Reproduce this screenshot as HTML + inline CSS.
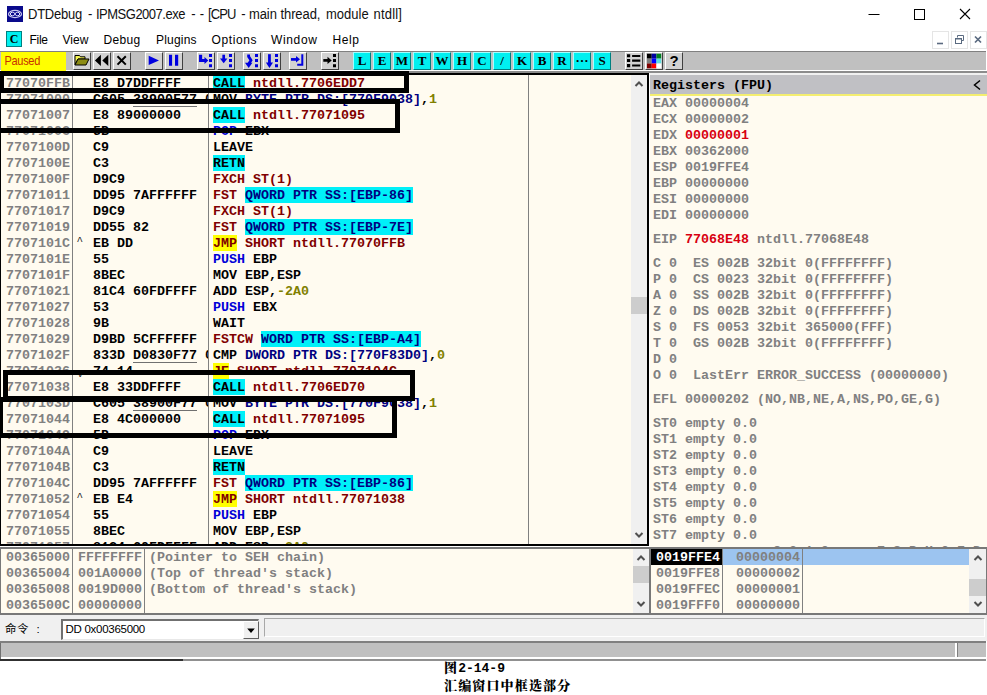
<!DOCTYPE html><html><head><meta charset="utf-8"><title>DTDebug</title><style>
*{box-sizing:border-box}
html,body{margin:0;padding:0;background:#fff}
body{width:987px;height:695px;position:relative;overflow:hidden;font-family:"Liberation Sans",sans-serif;}
.abs{position:absolute}
.mono{font-family:"Liberation Mono",monospace;font-weight:bold;font-size:13.33px;line-height:18px;white-space:pre;letter-spacing:0}
.seg{display:inline-block;height:16px;line-height:18px;vertical-align:top}
.title{left:29px;top:6px;font-size:13px;line-height:18px;color:#000;white-space:pre}
.title2 span{position:absolute;top:5.6px;font-size:13px;line-height:18px;color:#111;white-space:pre;transform:scaleY(1.08);transform-origin:0 13.4px}
.menu span{position:absolute;top:31px;font-size:12px;line-height:18px;color:#000}
.tb{left:0;top:51px;width:986px;height:19px;background:#c0c0c0;border-top:1px solid #808080}
.btn{position:absolute;top:52px;width:18px;height:18px;background:#d2d2d2;border:1px solid;border-color:#fff #404040 #404040 #fff}
.lbtn{position:absolute;top:52px;width:18px;height:18px;background:#00f0f0;border:1px solid;border-color:#a0ffff #008080 #008080 #a0ffff;font-family:"Liberation Serif",serif;font-weight:bold;font-size:13px;line-height:16px;text-align:center;color:#000}
.pane{position:absolute;background:#fffbf0;overflow:hidden}
.row{position:absolute;left:0;height:16px;width:100%}
.row .c{position:absolute;top:0;height:16px;line-height:18px}
.g{color:#808080}.k{color:#000}.r{color:#800000}.n{color:#000080}.b{color:#0000d8}.o{color:#808000}.red{color:#d80010}
.cy{background:#00f0f8}.ye{background:#ffff00}
.vl{position:absolute;width:1px;background:#808080}
.box{position:absolute;border:5px solid #000}
.sb{position:absolute;background:#f0f0f0}
.thumb{position:absolute;background:#cdcdcd}
.cap{position:absolute;left:444px;font-family:"Liberation Serif","Noto Serif CJK SC",serif;font-weight:900;font-size:13px;letter-spacing:1.15px;line-height:16px;color:#000;white-space:pre}
.cap i{font-style:normal;display:inline-block;width:7.8px;text-align:center;letter-spacing:0;font-family:'Liberation Mono',monospace;font-size:13px}
</style></head><body>
<svg class="abs" style="left:7px;top:6px" width="16" height="16" viewBox="0 0 16 16"><rect width="16" height="16" fill="#0a0a8c"/><ellipse cx="8" cy="8" rx="6.5" ry="3.6" fill="none" stroke="#c8c8f0" stroke-width="1.2"/><ellipse cx="5.5" cy="8" rx="2.2" ry="1.8" fill="none" stroke="#e8e8ff" stroke-width="1"/><ellipse cx="10.5" cy="8" rx="2.2" ry="1.8" fill="none" stroke="#e8e8ff" stroke-width="1"/><path d="M6 6 L10 10 M10 6 L6 10" stroke="#b0b0e8" stroke-width="0.8"/></svg>
<div class="title2"><span style="left:28px;letter-spacing:-0.23px">DTDebug</span> <span style="left:88px;letter-spacing:0px">-</span> <span style="left:96px;letter-spacing:-0.5px">IPMSG2007.exe</span> <span style="left:191.2px;letter-spacing:0px">-</span> <span style="left:199.8px;letter-spacing:0px">-</span> <span style="left:208px;letter-spacing:-0.9px">[CPU</span> <span style="left:241.2px;letter-spacing:0px">-</span> <span style="left:249px;letter-spacing:-0.1px">main</span> <span style="left:280.5px;letter-spacing:-0.1px">thread,</span> <span style="left:326px;letter-spacing:0px">module</span> <span style="left:373.5px;letter-spacing:0.2px">ntdll]</span></div>
<svg class="abs" style="left:860px;top:0" width="127" height="30" viewBox="0 0 127 30"><path d="M8.5 14.5 H19.5" stroke="#000" stroke-width="1"/><rect x="54.5" y="9.5" width="10" height="10" fill="none" stroke="#000" stroke-width="1"/><path d="M100 9 L110 19 M110 9 L100 19" stroke="#000" stroke-width="1.1"/></svg>
<div class="abs" style="left:6px;top:31px;width:16px;height:16px;background:#00f0f0;border:1px solid #008080;font-family:'Liberation Serif',serif;font-weight:bold;font-size:12px;line-height:14px;text-align:center;color:#000">C</div>
<div class="menu">
<span style="left:29.5px;letter-spacing:-0.3px">File</span>
<span style="left:62.5px;letter-spacing:0px">View</span>
<span style="left:103.5px;letter-spacing:0.3px">Debug</span>
<span style="left:156px;letter-spacing:0.2px">Plugins</span>
<span style="left:211.5px;letter-spacing:0.6px">Options</span>
<span style="left:271px;letter-spacing:0.65px">Window</span>
<span style="left:332.5px;letter-spacing:0.6px">Help</span>
</div>
<div class="abs" style="left:932px;top:31px;width:17px;height:18px;border:1px solid #e5e5e5;background:#fff"></div>
<div class="abs" style="left:951px;top:31px;width:17px;height:18px;border:1px solid #e5e5e5;background:#fff"></div>
<div class="abs" style="left:970px;top:31px;width:17px;height:18px;border:1px solid #e5e5e5;background:#fff"></div>
<svg class="abs" style="left:932px;top:31px" width="55" height="18" viewBox="0 0 55 18"><path d="M5 12.5 H11" stroke="#5a6a80" stroke-width="1.6"/><path d="M25.5 6.5 V4.5 H31.5 V9.5 H29.5" fill="none" stroke="#5a6a80" stroke-width="1"/><rect x="23.5" y="7.5" width="6" height="5" fill="none" stroke="#5a6a80" stroke-width="1"/><path d="M23 7.8 H30" stroke="#5a6a80" stroke-width="1.4"/><path d="M43 5.5 L49 11.5 M49 5.5 L43 11.5" stroke="#5a6a80" stroke-width="1.7"/></svg>
<div class="abs tb"></div>
<div class="abs" style="left:1px;top:52px;width:65px;height:19px;background:#ffff00;font-size:11px;letter-spacing:-0.3px;line-height:18px;color:#c83000;padding-left:3.5px"><span style="display:inline-block;transform:scaleY(1.13);transform-origin:0 13px">Paused</span></div>
<div class="btn" style="left:73px"><svg width="18" height="18" viewBox="0 0 18 18" style="position:absolute;left:-1px;top:-1px"><path d="M2 3.5 H6.5 L7.5 4.8 H12 V7 H5 L2 12.5 Z" fill="#f4f450" stroke="#000" stroke-width="1"/><path d="M2 13 L5 7 H16 L13 13 Z" fill="#8c8c14" stroke="#000" stroke-width="1"/></svg></div>
<div class="btn" style="left:93px"><svg width="18" height="18" viewBox="0 0 18 18" style="position:absolute;left:-1px;top:-1px"><path d="M7.9 2.7 V14.1 L1.9 8.4 Z M15.3 2.7 V14.1 L9.3 8.4 Z" fill="#000"/></svg></div>
<div class="btn" style="left:113px"><svg width="18" height="18" viewBox="0 0 18 18" style="position:absolute;left:-1px;top:-1px"><path d="M4.5 4.3 L12.8 12.6 M12.8 4.3 L4.5 12.6" stroke="#000" stroke-width="2"/></svg></div>
<div class="btn" style="left:145px"><svg width="18" height="18" viewBox="0 0 18 18" style="position:absolute;left:-1px;top:-1px"><path d="M3.7 3.8 L14 8.4 L3.7 13 Z" fill="#0000e0"/></svg></div>
<div class="btn" style="left:165px"><svg width="18" height="18" viewBox="0 0 18 18" style="position:absolute;left:-1px;top:-1px"><path d="M4 2.7 H7.1 V13.7 H4 Z M10 2.7 H13.2 V13.7 H10 Z" fill="#0000e0"/></svg></div>
<div class="btn" style="left:197px"><svg width="18" height="18" viewBox="0 0 18 18" style="position:absolute;left:-1px;top:-1px"><path d="M3.6 2.7 V8.5 H8" fill="none" stroke="#0000e0" stroke-width="3.1"/><path d="M7.5 5 L11.3 8.5 L7.5 12 Z" fill="#0000e0"/><path d="M12 2 h3 v3 h-3z M12 7 h3 v3 h-3z M12 12.2 h3 v3 h-3z" fill="#0000e0"/></svg></div>
<div class="btn" style="left:217px"><svg width="18" height="18" viewBox="0 0 18 18" style="position:absolute;left:-1px;top:-1px"><path d="M6.7 2.7 V7" stroke="#0000e0" stroke-width="2.7"/><path d="M3 6.5 H10.4 L6.7 11.3 Z" fill="#0000e0"/><path d="M12 2 h3 v3 h-3z M12 7 h3 v3 h-3z M12 12.2 h3 v3 h-3z" fill="#0000e0"/></svg></div>
<div class="btn" style="left:243px"><svg width="18" height="18" viewBox="0 0 18 18" style="position:absolute;left:-1px;top:-1px"><path d="M5.6 2.4 V4.5 L8 8.3 L5.7 12" fill="none" stroke="#0000e0" stroke-width="2.8"/><path d="M2 10.8 H9.4 L5.7 16 Z" fill="#0000e0"/><path d="M12 2 h3 v3 h-3z M12 7 h3 v3 h-3z M12 12.2 h3 v3 h-3z" fill="#0000e0"/></svg></div>
<div class="btn" style="left:263px"><svg width="18" height="18" viewBox="0 0 18 18" style="position:absolute;left:-1px;top:-1px"><path d="M6.45 2.2 V11.5" stroke="#0000e0" stroke-width="2.8"/><path d="M2.9 10.5 H10 L6.45 15.9 Z" fill="#0000e0"/><path d="M12 2 h3 v3 h-3z M12 7 h3 v3 h-3z M12 12.2 h3 v3 h-3z" fill="#0000e0"/></svg></div>
<div class="btn" style="left:289px"><svg width="18" height="18" viewBox="0 0 18 18" style="position:absolute;left:-1px;top:-1px"><path d="M2 7.4 H7.8" stroke="#0000e0" stroke-width="2.7"/><path d="M7 4 L11 7.3 L7 10.6 Z" fill="#0000e0"/><path d="M13.3 2.2 V12.7 H8.2" fill="none" stroke="#0000e0" stroke-width="2"/></svg></div>
<div class="btn" style="left:321px"><svg width="18" height="18" viewBox="0 0 18 18" style="position:absolute;left:-1px;top:-1px"><path d="M2.3 8.4 H7.5" stroke="#000" stroke-width="2.7"/><path d="M6.5 4.8 L10.7 8.4 L6.5 12 Z" fill="#000"/><path d="M12 2 h3 v3 h-3z M12 7 h3 v3 h-3z M12 12.2 h3 v3 h-3z" fill="#000"/></svg></div>
<div class="btn" style="left:625px"><svg width="18" height="18" viewBox="0 0 18 18" style="position:absolute;left:-1px;top:-1px"><path d="M2 2.3 h3.2 v3 h-3.2z M2 7 h3.2 v3 h-3.2z M2 12 h3.2 v3.3 h-3.2z" fill="#000"/><path d="M7.1 4 H15.3 M7.1 8.7 H15.3 M7.1 13.5 H15.3" stroke="#000" stroke-width="2.2"/></svg></div>
<div class="btn" style="left:645px"><svg width="18" height="18" viewBox="0 0 18 18" style="position:absolute;left:-1px;top:-1px"><rect x="2" y="1.7" width="4.7" height="4.9" fill="#000"/><rect x="6.7" y="1.7" width="4.7" height="4.9" fill="#0000a0"/><rect x="11.4" y="1.7" width="4.8" height="4.9" fill="#008020"/><rect x="2" y="6.6" width="4.7" height="4.9" fill="#808080"/><rect x="6.7" y="6.6" width="4.7" height="4.9" fill="#0000ff"/><rect x="11.4" y="6.6" width="4.8" height="4.9" fill="#60e0e0"/><rect x="2" y="11.5" width="4.7" height="4.8" fill="#800000"/><rect x="6.7" y="11.5" width="4.7" height="4.8" fill="#ff0000"/><rect x="11.4" y="11.5" width="4.8" height="4.8" fill="#ffffff"/></svg></div>
<div class="btn" style="left:665px;font-family:'Liberation Sans',sans-serif;font-weight:bold;font-size:15px;line-height:16px;text-align:center;color:#000">?</div>
<div class="lbtn" style="left:353px">L</div>
<div class="lbtn" style="left:373px">E</div>
<div class="lbtn" style="left:393px">M</div>
<div class="lbtn" style="left:413px">T</div>
<div class="lbtn" style="left:433px">W</div>
<div class="lbtn" style="left:453px">H</div>
<div class="lbtn" style="left:473px">C</div>
<div class="lbtn" style="left:493px">/</div>
<div class="lbtn" style="left:513px">K</div>
<div class="lbtn" style="left:533px">B</div>
<div class="lbtn" style="left:553px">R</div>
<div class="lbtn" style="left:573px"><span style="position:relative;top:-3px">…</span></div>
<div class="lbtn" style="left:593px">S</div>
<div class="abs" style="left:0;top:71px;width:987px;height:2px;background:#8c8c8c"></div>
<div class="abs" style="left:0;top:73px;width:649px;height:473px;background:#000"></div>
<div class="pane mono" style="left:1px;top:75px;width:646px;height:469px">
<div class="row" style="top:0px"><span class="c g" style="left:5px">77070FFB</span> <span class="c k" style="left:76px;width:130.5px;overflow:hidden">  E8 D7DDFFFF</span> <span class="c" style="left:212px"><span class="seg k cy">CALL</span><span class="seg r"> ntdll.7706EDD7</span></span></div>
<div class="row" style="top:16px"><span class="c g" style="left:5px">77071000</span> <span class="c k" style="left:76px;width:130.5px;overflow:hidden">  C605 38900F77 01</span> <span class="c" style="left:132px;top:15px;width:64px;height:1px;background:#707070"></span><span class="c" style="left:212px"><span class="seg k">MOV </span><span class="seg n">BYTE PTR DS:[770F9038]</span><span class="seg k">,</span><span class="seg o">1</span></span></div>
<div class="row" style="top:32px"><span class="c g" style="left:5px">77071007</span> <span class="c k" style="left:76px;width:130.5px;overflow:hidden">  E8 89000000</span> <span class="c" style="left:212px"><span class="seg k cy">CALL</span><span class="seg r"> ntdll.77071095</span></span></div>
<div class="row" style="top:48px"><span class="c g" style="left:5px">7707100C</span> <span class="c k" style="left:76px;width:130.5px;overflow:hidden">  5B</span> <span class="c" style="left:212px"><span class="seg b">POP</span><span class="seg k"> EBX</span></span></div>
<div class="row" style="top:64px"><span class="c g" style="left:5px">7707100D</span> <span class="c k" style="left:76px;width:130.5px;overflow:hidden">  C9</span> <span class="c" style="left:212px"><span class="seg k">LEAVE</span></span></div>
<div class="row" style="top:80px"><span class="c g" style="left:5px">7707100E</span> <span class="c k" style="left:76px;width:130.5px;overflow:hidden">  C3</span> <span class="c" style="left:212px"><span class="seg k cy">RETN</span></span></div>
<div class="row" style="top:96px"><span class="c g" style="left:5px">7707100F</span> <span class="c k" style="left:76px;width:130.5px;overflow:hidden">  D9C9</span> <span class="c" style="left:212px"><span class="seg r">FXCH ST(1)</span></span></div>
<div class="row" style="top:112px"><span class="c g" style="left:5px">77071011</span> <span class="c k" style="left:76px;width:130.5px;overflow:hidden">  DD95 7AFFFFFF</span> <span class="c" style="left:212px"><span class="seg r">FST </span><span class="seg n cy">QWORD PTR SS:[EBP-86]</span></span></div>
<div class="row" style="top:128px"><span class="c g" style="left:5px">77071017</span> <span class="c k" style="left:76px;width:130.5px;overflow:hidden">  D9C9</span> <span class="c" style="left:212px"><span class="seg r">FXCH ST(1)</span></span></div>
<div class="row" style="top:144px"><span class="c g" style="left:5px">77071019</span> <span class="c k" style="left:76px;width:130.5px;overflow:hidden">  DD55 82</span> <span class="c" style="left:212px"><span class="seg r">FST </span><span class="seg n cy">QWORD PTR SS:[EBP-7E]</span></span></div>
<div class="row" style="top:160px"><span class="c g" style="left:5px">7707101C</span> <span class="c" style="left:75.5px;top:-2.5px;color:#202020;font-weight:normal;font-size:11px;line-height:16px">^</span><span class="c k" style="left:76px;width:130.5px;overflow:hidden">  EB DD</span> <span class="c" style="left:212px"><span class="seg r ye">JMP</span><span class="seg r"> SHORT ntdll.77070FFB</span></span></div>
<div class="row" style="top:176px"><span class="c g" style="left:5px">7707101E</span> <span class="c k" style="left:76px;width:130.5px;overflow:hidden">  55</span> <span class="c" style="left:212px"><span class="seg b">PUSH</span><span class="seg k"> EBP</span></span></div>
<div class="row" style="top:192px"><span class="c g" style="left:5px">7707101F</span> <span class="c k" style="left:76px;width:130.5px;overflow:hidden">  8BEC</span> <span class="c" style="left:212px"><span class="seg k">MOV EBP,ESP</span></span></div>
<div class="row" style="top:208px"><span class="c g" style="left:5px">77071021</span> <span class="c k" style="left:76px;width:130.5px;overflow:hidden">  81C4 60FDFFFF</span> <span class="c" style="left:212px"><span class="seg k">ADD ESP,</span><span class="seg o">-2A0</span></span></div>
<div class="row" style="top:224px"><span class="c g" style="left:5px">77071027</span> <span class="c k" style="left:76px;width:130.5px;overflow:hidden">  53</span> <span class="c" style="left:212px"><span class="seg b">PUSH</span><span class="seg k"> EBX</span></span></div>
<div class="row" style="top:240px"><span class="c g" style="left:5px">77071028</span> <span class="c k" style="left:76px;width:130.5px;overflow:hidden">  9B</span> <span class="c" style="left:212px"><span class="seg k">WAIT</span></span></div>
<div class="row" style="top:256px"><span class="c g" style="left:5px">77071029</span> <span class="c k" style="left:76px;width:130.5px;overflow:hidden">  D9BD 5CFFFFFF</span> <span class="c" style="left:212px"><span class="seg r">FSTCW </span><span class="seg n cy">WORD PTR SS:[EBP-A4]</span></span></div>
<div class="row" style="top:272px"><span class="c g" style="left:5px">7707102F</span> <span class="c k" style="left:76px;width:130.5px;overflow:hidden">  833D D0830F77 00</span> <span class="c" style="left:132px;top:15px;width:64px;height:1px;background:#707070"></span><span class="c" style="left:212px"><span class="seg k">CMP </span><span class="seg n">DWORD PTR DS:[770F83D0]</span><span class="seg k">,</span><span class="seg o">0</span></span></div>
<div class="row" style="top:288px"><span class="c g" style="left:5px">77071036</span> <span class="c" style="left:76.5px;top:4px;color:#202020;font-weight:normal;font-size:9px;line-height:16px">v</span><span class="c k" style="left:76px;width:130.5px;overflow:hidden">  74 14</span> <span class="c" style="left:212px"><span class="seg r ye">JE</span><span class="seg r"> SHORT ntdll.7707104C</span></span></div>
<div class="row" style="top:304px"><span class="c g" style="left:5px">77071038</span> <span class="c k" style="left:76px;width:130.5px;overflow:hidden">  E8 33DDFFFF</span> <span class="c" style="left:212px"><span class="seg k cy">CALL</span><span class="seg r"> ntdll.7706ED70</span></span></div>
<div class="row" style="top:320px"><span class="c g" style="left:5px">7707103D</span> <span class="c k" style="left:76px;width:130.5px;overflow:hidden">  C605 38900F77 01</span> <span class="c" style="left:132px;top:15px;width:64px;height:1px;background:#707070"></span><span class="c" style="left:212px"><span class="seg k">MOV </span><span class="seg n">BYTE PTR DS:[770F9038]</span><span class="seg k">,</span><span class="seg o">1</span></span></div>
<div class="row" style="top:336px"><span class="c g" style="left:5px">77071044</span> <span class="c k" style="left:76px;width:130.5px;overflow:hidden">  E8 4C000000</span> <span class="c" style="left:212px"><span class="seg k cy">CALL</span><span class="seg r"> ntdll.77071095</span></span></div>
<div class="row" style="top:352px"><span class="c g" style="left:5px">77071049</span> <span class="c k" style="left:76px;width:130.5px;overflow:hidden">  5B</span> <span class="c" style="left:212px"><span class="seg b">POP</span><span class="seg k"> EBX</span></span></div>
<div class="row" style="top:368px"><span class="c g" style="left:5px">7707104A</span> <span class="c k" style="left:76px;width:130.5px;overflow:hidden">  C9</span> <span class="c" style="left:212px"><span class="seg k">LEAVE</span></span></div>
<div class="row" style="top:384px"><span class="c g" style="left:5px">7707104B</span> <span class="c k" style="left:76px;width:130.5px;overflow:hidden">  C3</span> <span class="c" style="left:212px"><span class="seg k cy">RETN</span></span></div>
<div class="row" style="top:400px"><span class="c g" style="left:5px">7707104C</span> <span class="c k" style="left:76px;width:130.5px;overflow:hidden">  DD95 7AFFFFFF</span> <span class="c" style="left:212px"><span class="seg r">FST </span><span class="seg n cy">QWORD PTR SS:[EBP-86]</span></span></div>
<div class="row" style="top:416px"><span class="c g" style="left:5px">77071052</span> <span class="c" style="left:75.5px;top:-2.5px;color:#202020;font-weight:normal;font-size:11px;line-height:16px">^</span><span class="c k" style="left:76px;width:130.5px;overflow:hidden">  EB E4</span> <span class="c" style="left:212px"><span class="seg r ye">JMP</span><span class="seg r"> SHORT ntdll.77071038</span></span></div>
<div class="row" style="top:432px"><span class="c g" style="left:5px">77071054</span> <span class="c k" style="left:76px;width:130.5px;overflow:hidden">  55</span> <span class="c" style="left:212px"><span class="seg b">PUSH</span><span class="seg k"> EBP</span></span></div>
<div class="row" style="top:448px"><span class="c g" style="left:5px">77071055</span> <span class="c k" style="left:76px;width:130.5px;overflow:hidden">  8BEC</span> <span class="c" style="left:212px"><span class="seg k">MOV EBP,ESP</span></span></div>
<div class="row" style="top:464px"><span class="c g" style="left:5px">77071057</span> <span class="c k" style="left:76px;width:130.5px;overflow:hidden">  81C4 60FDFFFF</span> <span class="c" style="left:212px"><span class="seg k">ADD ESP,</span><span class="seg o">-2A0</span></span></div>
<div class="vl" style="left:71px;top:0;height:469px"></div>
<div class="vl" style="left:207px;top:0;height:469px"></div>
<div class="vl" style="left:527px;top:0;height:469px"></div>
<div class="sb" style="left:630px;top:0;width:16px;height:469px"><div class="thumb" style="left:0;top:222px;width:16px;height:17px"></div><svg class="abs" style="left:0;top:0" width="16" height="16"><path d="M4.5 11 L8 7.5 L11.5 11" fill="none" stroke="#505050" stroke-width="2"/></svg><svg class="abs" style="left:0;top:452px" width="16" height="16"><path d="M4.5 6 L8 9.5 L11.5 6" fill="none" stroke="#505050" stroke-width="2"/></svg></div>
</div>
<div class="box" style="left:-1px;top:71px;width:409.7px;height:21.599999999999994px"></div>
<div class="box" style="left:-4px;top:99px;width:404px;height:33.5px"></div>
<div class="box" style="left:3.3px;top:370px;width:411.7px;height:30.5px"></div>
<div class="box" style="left:-2.5px;top:396.7px;width:399.2px;height:41.80000000000001px"></div>
<div class="abs" style="left:650px;top:73px;width:337px;height:2px;background:#f0f0f0"></div>
<div class="pane mono" style="left:650px;top:75px;width:337px;height:472px">
<div class="abs" style="left:0;top:0;width:337px;height:21px;background:#c0c0c4;border-bottom:2px solid #f4ee70"></div>
<div class="row k" style="top:2px"><span class="c" style="left:3px">Registers (FPU)</span></div>
<svg class="abs" style="left:322px;top:4px" width="10" height="12"><path d="M8 1.5 L2.5 6 L8 10.5" fill="none" stroke="#000" stroke-width="1.5"/></svg>
<div class="row" style="top:20px"><span class="c" style="left:3px"><span class="g">EAX 00000004</span></span></div>
<div class="row" style="top:36px"><span class="c" style="left:3px"><span class="g">ECX 00000002</span></span></div>
<div class="row" style="top:52px"><span class="c" style="left:3px"><span class="g">EDX </span><span class="red">00000001</span></span></div>
<div class="row" style="top:68px"><span class="c" style="left:3px"><span class="g">EBX 00362000</span></span></div>
<div class="row" style="top:84px"><span class="c" style="left:3px"><span class="g">ESP 0019FFE4</span></span></div>
<div class="row" style="top:100px"><span class="c" style="left:3px"><span class="g">EBP 00000000</span></span></div>
<div class="row" style="top:116px"><span class="c" style="left:3px"><span class="g">ESI 00000000</span></span></div>
<div class="row" style="top:132px"><span class="c" style="left:3px"><span class="g">EDI 00000000</span></span></div>
<div class="row" style="top:156px"><span class="c" style="left:3px"><span class="g">EIP </span><span class="red">77068E48</span><span class="g"> ntdll.77068E48</span></span></div>
<div class="row" style="top:180px"><span class="c" style="left:3px"><span class="g">C 0  ES 002B 32bit 0(FFFFFFFF)</span></span></div>
<div class="row" style="top:196px"><span class="c" style="left:3px"><span class="g">P 0  CS 0023 32bit 0(FFFFFFFF)</span></span></div>
<div class="row" style="top:212px"><span class="c" style="left:3px"><span class="g">A 0  SS 002B 32bit 0(FFFFFFFF)</span></span></div>
<div class="row" style="top:228px"><span class="c" style="left:3px"><span class="g">Z 0  DS 002B 32bit 0(FFFFFFFF)</span></span></div>
<div class="row" style="top:244px"><span class="c" style="left:3px"><span class="g">S 0  FS 0053 32bit 365000(FFF)</span></span></div>
<div class="row" style="top:260px"><span class="c" style="left:3px"><span class="g">T 0  GS 002B 32bit 0(FFFFFFFF)</span></span></div>
<div class="row" style="top:276px"><span class="c" style="left:3px"><span class="g">D 0</span></span></div>
<div class="row" style="top:292px"><span class="c" style="left:3px"><span class="g">O 0  LastErr ERROR_SUCCESS (00000000)</span></span></div>
<div class="row" style="top:316px"><span class="c" style="left:3px"><span class="g">EFL 00000202 (NO,NB,NE,A,NS,PO,GE,G)</span></span></div>
<div class="row" style="top:340px"><span class="c" style="left:3px"><span class="g">ST0 empty 0.0</span></span></div>
<div class="row" style="top:356px"><span class="c" style="left:3px"><span class="g">ST1 empty 0.0</span></span></div>
<div class="row" style="top:372px"><span class="c" style="left:3px"><span class="g">ST2 empty 0.0</span></span></div>
<div class="row" style="top:388px"><span class="c" style="left:3px"><span class="g">ST3 empty 0.0</span></span></div>
<div class="row" style="top:404px"><span class="c" style="left:3px"><span class="g">ST4 empty 0.0</span></span></div>
<div class="row" style="top:420px"><span class="c" style="left:3px"><span class="g">ST5 empty 0.0</span></span></div>
<div class="row" style="top:436px"><span class="c" style="left:3px"><span class="g">ST6 empty 0.0</span></span></div>
<div class="row" style="top:452px"><span class="c" style="left:3px"><span class="g">ST7 empty 0.0</span></span></div>
<div class="row" style="top:468px"><span class="c" style="left:3px"><span class="g">               3 2 1 0      E S P U O Z D I</span></span></div>
</div>
<div class="abs" style="left:0;top:547px;width:651px;height:68px;background:#787878"></div>
<div class="pane mono" style="left:1px;top:549px;width:648px;height:64px">
<div class="row g" style="top:0px"><span class="c" style="left:5px">00365000</span> <span class="c" style="left:77px">FFFFFFFF</span> <span class="c" style="left:148px">(Pointer to SEH chain)</span></div>
<div class="row g" style="top:16px"><span class="c" style="left:5px">00365004</span> <span class="c" style="left:77px">001A0000</span> <span class="c" style="left:148px">(Top of thread's stack)</span></div>
<div class="row g" style="top:32px"><span class="c" style="left:5px">00365008</span> <span class="c" style="left:77px">0019D000</span> <span class="c" style="left:148px">(Bottom of thread's stack)</span></div>
<div class="row g" style="top:48px"><span class="c" style="left:5px">0036500C</span> <span class="c" style="left:77px">00000000</span> <span class="c" style="left:148px"></span></div>
<div class="vl" style="left:71px;top:0;height:64px"></div>
<div class="vl" style="left:143px;top:0;height:64px"></div>
<div class="sb" style="left:632px;top:0;width:16px;height:64px"><div class="thumb" style="left:0;top:17px;width:16px;height:17px"></div><svg class="abs" style="left:0;top:0px" width="16" height="16"><path d="M4.5 11 L8 7.5 L11.5 11" fill="none" stroke="#505050" stroke-width="2"/></svg><svg class="abs" style="left:0;top:47px" width="16" height="16"><path d="M4.5 6 L8 9.5 L11.5 6" fill="none" stroke="#505050" stroke-width="2"/></svg></div>
</div>
<div class="abs" style="left:649px;top:547px;width:338px;height:68px;background:#787878"></div>
<div class="pane mono" style="left:651px;top:549px;width:335px;height:64px">
<div class="abs" style="left:0;top:0;width:71px;height:16px;background:#000"></div>
<div class="abs" style="left:72px;top:0;width:246px;height:16px;background:#9cc4f0"></div>
<div class="row g" style="top:0px"><span class="c" style="left:5px;color:#fff">0019FFE4</span> <span class="c" style="left:85px">00000004</span></div>
<div class="row g" style="top:16px"><span class="c" style="left:5px">0019FFE8</span> <span class="c" style="left:85px">00000002</span></div>
<div class="row g" style="top:32px"><span class="c" style="left:5px">0019FFEC</span> <span class="c" style="left:85px">00000001</span></div>
<div class="row g" style="top:48px"><span class="c" style="left:5px">0019FFF0</span> <span class="c" style="left:85px">00000000</span></div>
<div class="vl" style="left:71px;top:0;height:64px"></div>
<div class="vl" style="left:151px;top:0;height:64px"></div>
<div class="sb" style="left:318px;top:0;width:17px;height:64px"><div class="thumb" style="left:0;top:30px;width:17px;height:17px"></div><svg class="abs" style="left:1px;top:0px" width="16" height="16"><path d="M4.5 11 L8 7.5 L11.5 11" fill="none" stroke="#505050" stroke-width="2"/></svg><svg class="abs" style="left:1px;top:47px" width="16" height="16"><path d="M4.5 6 L8 9.5 L11.5 6" fill="none" stroke="#505050" stroke-width="2"/></svg></div>
</div>
<div class="abs" style="left:0;top:615px;width:987px;height:26px;background:#f0f0f0"></div>
<div class="abs" style="left:5px;top:621px;font-family:'Liberation Sans','Noto Sans CJK SC',sans-serif;font-size:11.5px;line-height:16px;color:#000;white-space:pre;letter-spacing:0.5px">命令  :</div>
<div class="abs" style="left:61px;top:619px;width:198px;height:21px;background:#fff;border:2px solid;border-color:#707070 #e8e8e8 #e8e8e8 #707070;border-right-width:1px;border-bottom-width:1px"><div class="abs" style="left:2.5px;top:1px;font-size:11.5px;letter-spacing:-0.28px;line-height:15px;color:#000;white-space:pre">DD 0x00365000</div><div class="abs" style="left:180px;top:0;width:16px;height:18px;background:#f0f0f0;border:1px solid;border-color:#fff #606060 #606060 #fff"><svg width="14" height="16" style="display:block"><path d="M3.2 6.5 H10.8 L7 10.9 Z" fill="#000"/></svg></div></div>
<div class="abs" style="left:264px;top:618px;width:721px;height:19px;background:#f0f0f0;border:1px solid;border-color:#a8a8a8 #fff #fff #a8a8a8"></div>
<div class="abs" style="left:0;top:641px;width:986px;height:20px;background:#c0c0c0;border-top:2px solid #808080;border-bottom:2px solid #909090"></div>
<div class="abs" style="left:0;top:657px;width:987px;height:2px;background:#fff"></div>
<div class="abs" style="left:0;top:659px;width:183px;height:2px;background:#303030"></div>
<div class="abs" style="left:0;top:643px;width:1px;height:16px;background:#707070"></div>
<div class="abs" style="left:955px;top:643px;width:2px;height:14px;background:#fff"></div><div class="abs" style="left:957px;top:643px;width:1px;height:14px;background:#808080"></div>
<div class="cap" style="top:660px">图<i>2</i><i>-</i><i>1</i><i>4</i><i>-</i><i>9</i></div>
<div class="cap" style="top:678px">汇编窗口中框选部分</div>
</body></html>
